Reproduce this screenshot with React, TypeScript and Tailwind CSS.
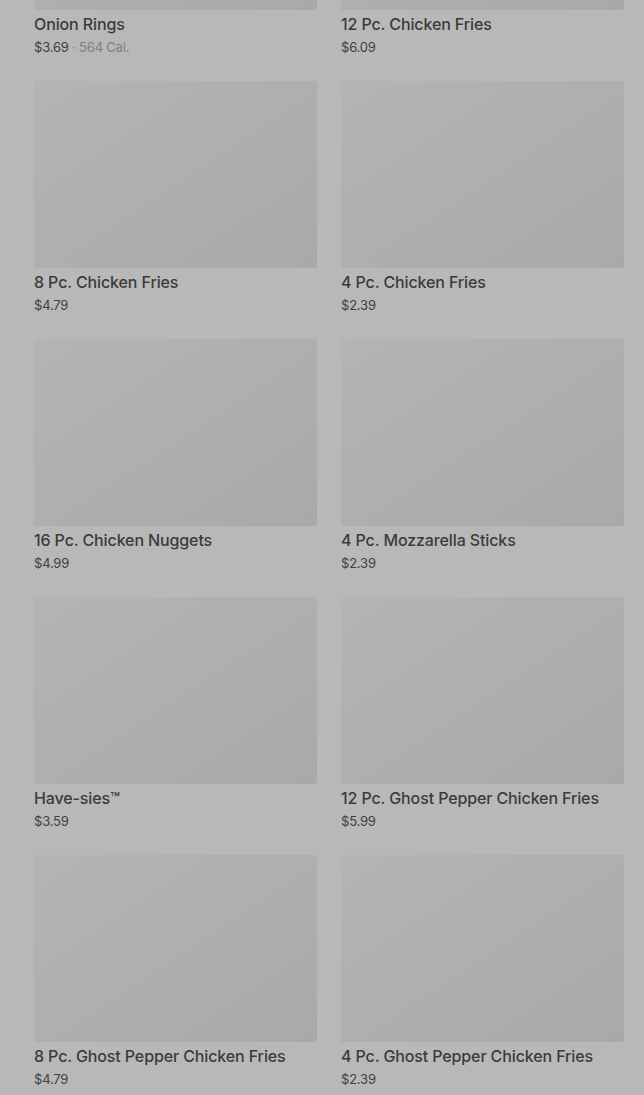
import React from "react";

interface Item {
  name: string;
  price: string;
  cal?: string;
}

const items: Item[] = [
  { name: "Onion Rings", price: "$3.69", cal: "564 Cal." },
  { name: "12 Pc. Chicken Fries", price: "$6.09" },
  { name: "8 Pc. Chicken Fries", price: "$4.79" },
  { name: "4 Pc. Chicken Fries", price: "$2.39" },
  { name: "16 Pc. Chicken Nuggets", price: "$4.99" },
  { name: "4 Pc. Mozzarella Sticks", price: "$2.39" },
  { name: "Have-sies™", price: "$3.59" },
  { name: "12 Pc. Ghost Pepper Chicken Fries", price: "$5.99" },
  { name: "8 Pc. Ghost Pepper Chicken Fries", price: "$4.79" },
  { name: "4 Pc. Ghost Pepper Chicken Fries", price: "$2.39" },
];

const MenuCard: React.FC<{ item: Item }> = ({ item }) => {
  return (
    <div className="flex flex-col h-[258px]">
      {/* image placeholder */}
      <div className="h-[187px] rounded-[2px] bg-gradient-to-br from-[#b4b4b4] to-[#a9a9a9]" />
      <div className="pt-[3px]">
        <h3 className="text-[16px] leading-[22px] font-medium text-[#3b3b3b] tracking-[-0.12px]">
          {item.name}
        </h3>
        <p className="text-[13px] leading-[18px] mt-[3px] text-[#404040] tracking-[-0.2px]">
          {item.price}
          {item.cal ? (
            <span className="text-[#808080]"> · {item.cal}</span>
          ) : null}
        </p>
      </div>
    </div>
  );
};

export default function App() {
  return (
    <div
      className="w-[644px] h-[1095px] overflow-hidden bg-[#b8b8b8]"
      style={{ fontFamily: "Inter, 'Noto Sans', sans-serif" }}
    >
      {/* page is scrolled, first row partly off screen */}
      <div className="grid grid-cols-2 gap-x-6 pl-[34px] pr-[20px] -mt-[177px]">
        {items.map((item) => (
          <MenuCard key={item.name} item={item} />
        ))}
      </div>
    </div>
  );
}
